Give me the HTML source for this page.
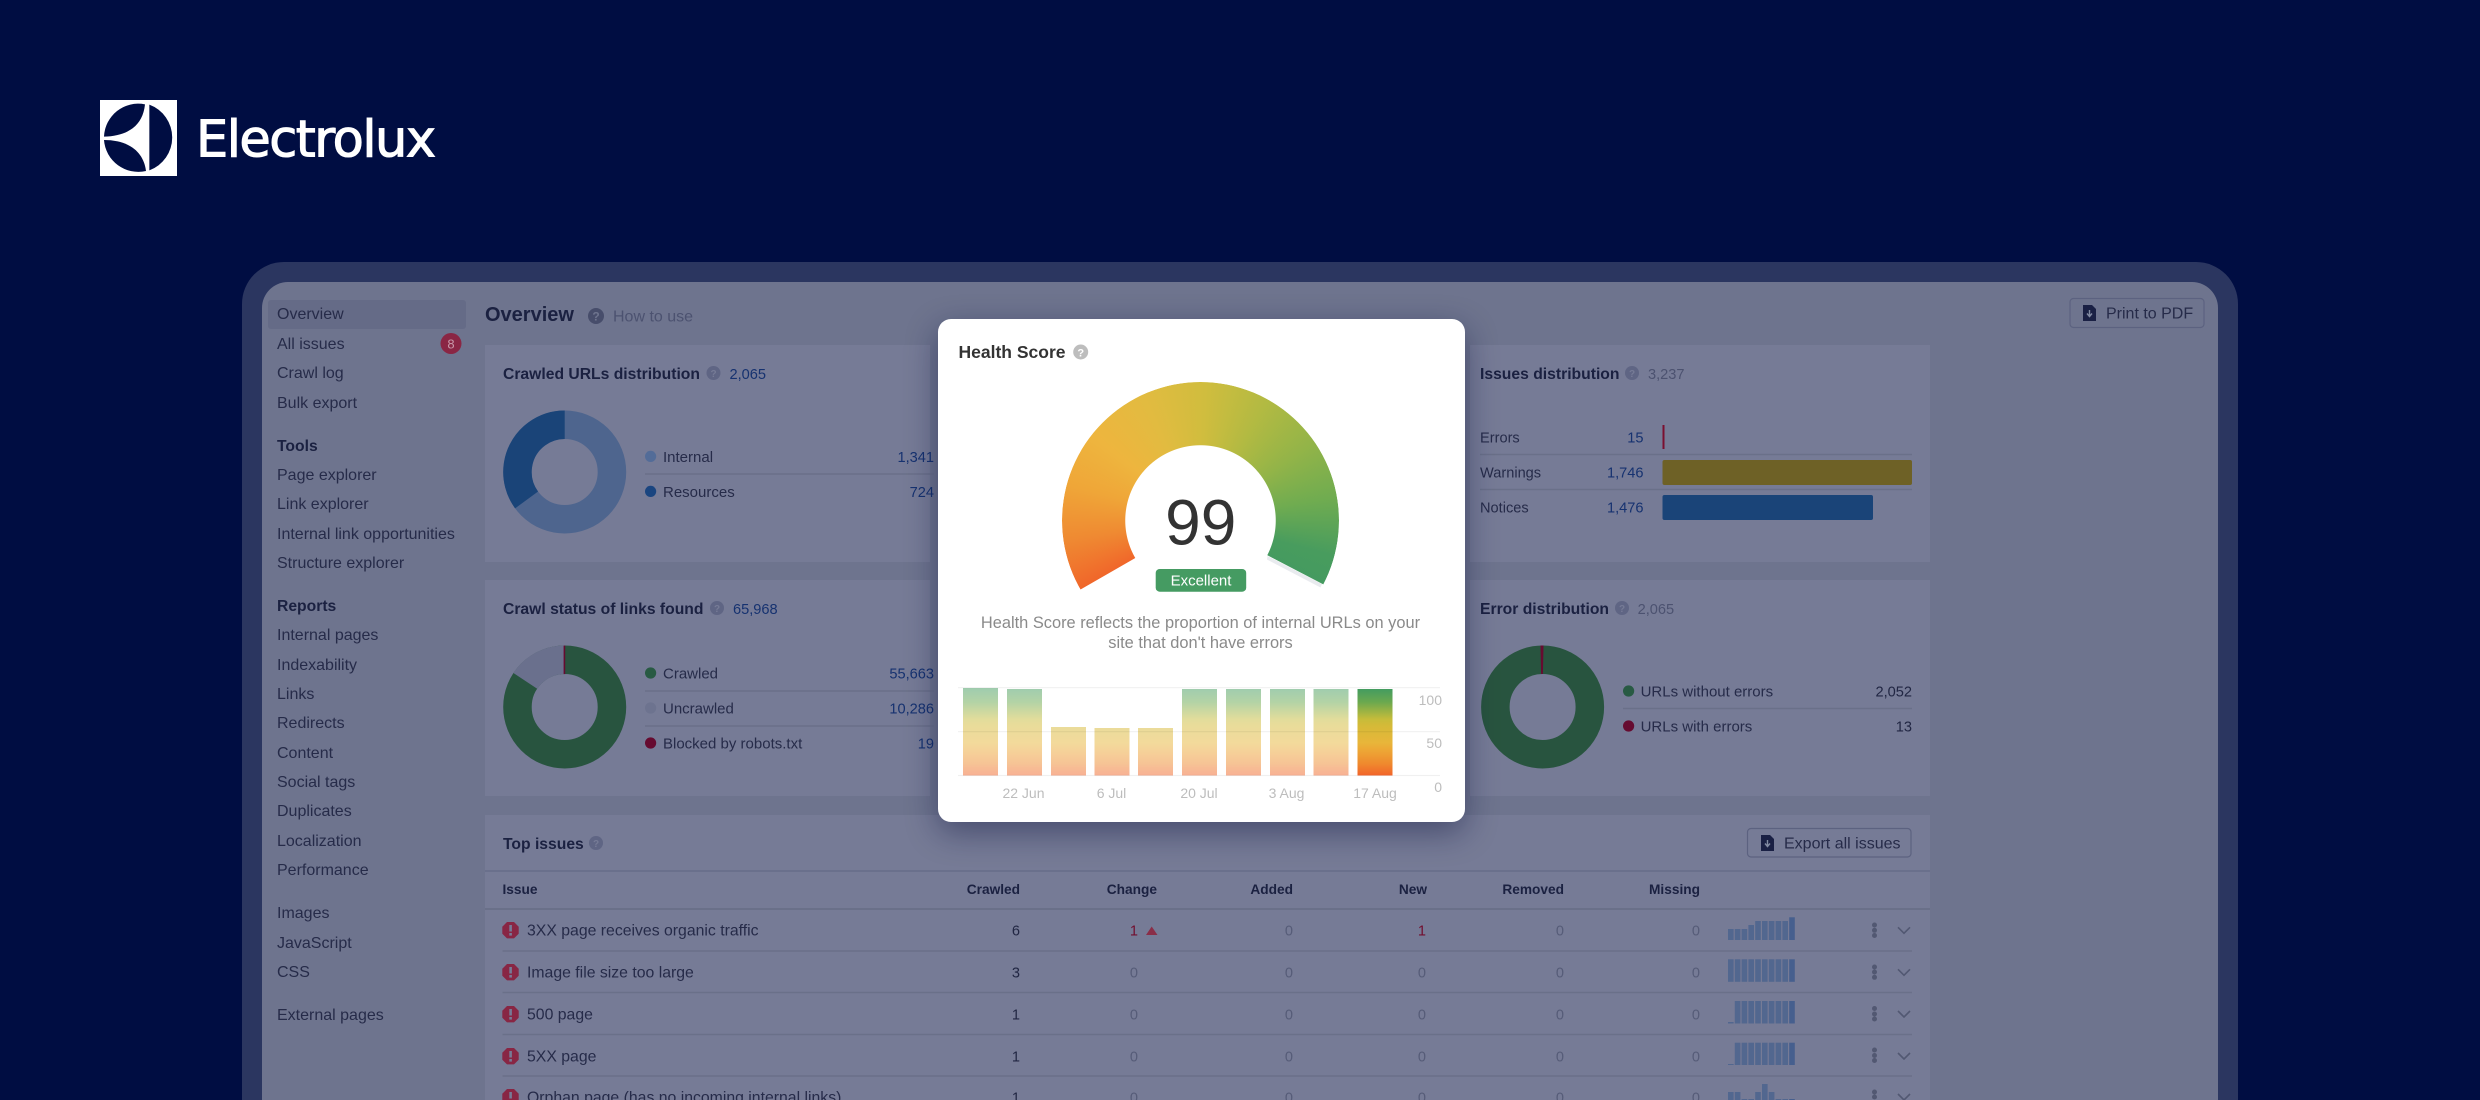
<!DOCTYPE html>
<html><head><meta charset="utf-8"><style>
html,body{margin:0;padding:0;width:2480px;height:1100px;overflow:hidden;background:#000d42}
svg{position:absolute;left:0;top:0}
text{font-family:"Liberation Sans",Arial,sans-serif;font-size:16px;fill:#262b49}
.b{font-weight:bold;fill:#1b2141;font-size:15.7px}
.s{fill:#262b49}
.m{fill:#262b49;font-size:15px}
.t{fill:#262b49;font-size:15.8px}
.r{text-anchor:end}
.bl{fill:#163270;font-size:14.6px}
.g{fill:#4c5270;font-size:14.6px}
.z{fill:#565c78;font-size:14.6px}
.d{fill:#212643;font-size:14.6px}
.h{font-size:13.7px;font-weight:bold;fill:#1b2141}
.l{stroke:#6a7089;stroke-width:1.5}
#card{position:absolute;left:938px;top:319px;width:527px;height:503px;background:#fff;border-radius:13px;box-shadow:0 10px 32px rgba(12,18,60,.45)}
#gauge{position:absolute;left:1062px;top:382px;width:277px;height:277px;border-radius:50%;
background:conic-gradient(from 240deg,#f0662a 0deg,#ef8a32 22deg,#efa638 45deg,#eeb53e 68deg,#e2bb40 95deg,#d0bd3e 122deg,#b3ba42 148deg,#93b448 175deg,#70ac50 200deg,#489c5e 225deg,#449a60 240deg,#449a60 300deg,#f0662a 300deg);
-webkit-mask:radial-gradient(circle at 50% 50%,transparent 75px,#000 75.5px);mask:radial-gradient(circle at 50% 50%,transparent 75px,#000 75.5px);
clip-path:polygon(50% 50%,-30% 96%,-30% -10%,130% -10%,130% 91.600%)}
</style></head><body>
<svg width="2480" height="1100" viewBox="0 0 2480 1100" style="filter:blur(.25px)">
<path d="M242 1100V304a42 42 0 0 1 42-42H2196a42 42 0 0 1 42 42V1100Z" fill="#2b3660"/>
<path d="M262 1100V308a26 26 0 0 1 26-26H2192a26 26 0 0 1 26 26V1100Z" fill="#6e748e"/>
<rect x="268" y="300" width="198" height="29" rx="3" fill="#656b87"/>
<text class="s" x="277" y="319">Overview</text>
<text class="s" x="277" y="349">All issues</text>
<circle cx="451" cy="343.500" r="10.500" fill="#8a2644"/><text x="451" y="348.500" text-anchor="middle" style="font-size:13px;fill:#c898a8">8</text>
<text class="s" x="277" y="378">Crawl log</text>
<text class="s" x="277" y="408">Bulk export</text>
<text class="b" x="277" y="451">Tools</text>
<text class="s" x="277" y="480">Page explorer</text>
<text class="s" x="277" y="509">Link explorer</text>
<text class="s" x="277" y="539">Internal link opportunities</text>
<text class="s" x="277" y="568">Structure explorer</text>
<text class="b" x="277" y="611">Reports</text>
<text class="s" x="277" y="640">Internal pages</text>
<text class="s" x="277" y="670">Indexability</text>
<text class="s" x="277" y="699">Links</text>
<text class="s" x="277" y="728">Redirects</text>
<text class="s" x="277" y="758">Content</text>
<text class="s" x="277" y="787">Social tags</text>
<text class="s" x="277" y="816">Duplicates</text>
<text class="s" x="277" y="846">Localization</text>
<text class="s" x="277" y="875">Performance</text>
<text class="s" x="277" y="918">Images</text>
<text class="s" x="277" y="948">JavaScript</text>
<text class="s" x="277" y="977">CSS</text>
<text class="s" x="277" y="1020">External pages</text>

<text class="b" x="485" y="321" style="font-size:20px">Overview</text>
<circle cx="596" cy="316" r="8" fill="#474d6b"/><text x="596" y="320.500" text-anchor="middle" style="font-size:12px;font-weight:bold;fill:#6e748e">?</text>
<text class="g" x="613" y="321.500" style="font-size:16px">How to use</text>
<rect x="2070" y="298.500" width="134" height="29" rx="3.500" fill="none" stroke="#5c6280" stroke-width="1.200"/>
<path d="M2083 305h9l4 4v12h-13z" fill="#1a2044"/><path d="M2089.500 310v6m-2.500-2.500l2.500 3 2.500-3" stroke="#828aa2" stroke-width="1.400" fill="none"/>
<text class="s" x="2106" y="318.500">Print to PDF</text>

<rect x="485" y="345" width="445" height="217" fill="#767b96"/>
<rect x="485" y="580" width="445" height="216" fill="#767b96"/>
<rect x="1470" y="345" width="460" height="217" fill="#767b96"/>
<rect x="1470" y="580" width="460" height="216" fill="#767b96"/>
<rect x="485" y="815" width="1445" height="285" fill="#767b96"/>

<text class="b" x="503" y="379">Crawled URLs distribution</text>
<circle cx="713.500" cy="373" r="7" fill="#5f6584"/><text x="713.500" y="377" text-anchor="middle" style="font-size:10px;font-weight:bold;fill:#767b96">?</text>
<text class="bl" x="729.500" y="379">2,065</text>
<circle cx="564.700" cy="472" r="47.250" fill="none" stroke="#4e658e" stroke-width="28.500"/>
<circle cx="564.700" cy="472" r="47.250" fill="none" stroke="#1a4478" stroke-width="28.500" pathLength="100" stroke-dasharray="35.060 100" transform="rotate(-216.200 564.700 472)"/>
<circle cx="650.600" cy="456.400" r="5.600" fill="#536c98"/><text class="m" x="663" y="462">Internal</text><text class="bl r" x="934" y="462">1,341</text>
<line class="l" x1="645" x2="934" y1="474" y2="474"/>
<circle cx="650.600" cy="491.400" r="5.600" fill="#1a4580"/><text class="m" x="663" y="497">Resources</text><text class="bl r" x="934" y="497">724</text>

<text class="b" x="503" y="614">Crawl status of links found</text>
<circle cx="717" cy="608" r="7" fill="#5f6584"/><text x="717" y="612" text-anchor="middle" style="font-size:10px;font-weight:bold;fill:#767b96">?</text>
<text class="bl" x="733" y="614">65,968</text>
<circle cx="564.700" cy="707" r="47.250" fill="none" stroke="#28543f" stroke-width="28.500"/>
<circle cx="564.700" cy="707" r="47.250" fill="none" stroke="#6a708d" stroke-width="28.500" pathLength="100" stroke-dasharray="15.600 100" transform="rotate(-146.500 564.700 707)"/>
<rect x="563.600" y="645.600" width="1.600" height="28.500" fill="#660b30"/>
<circle cx="650.600" cy="673" r="5.600" fill="#285a43"/><text class="m" x="663" y="678.500">Crawled</text><text class="bl r" x="934" y="678.500">55,663</text>
<line class="l" x1="645" x2="934" y1="691" y2="691"/>
<circle cx="650.600" cy="708" r="5.600" fill="#6d738f"/><text class="m" x="663" y="713.500">Uncrawled</text><text class="bl r" x="934" y="713.500">10,286</text>
<line class="l" x1="645" x2="934" y1="726" y2="726"/>
<circle cx="650.600" cy="743" r="5.600" fill="#660b30"/><text class="m" x="663" y="748.500">Blocked by robots.txt</text><text class="bl r" x="934" y="748.500">19</text>

<text class="b" x="1480" y="379">Issues distribution</text>
<circle cx="1632" cy="373" r="7" fill="#5f6584"/><text x="1632" y="377" text-anchor="middle" style="font-size:10px;font-weight:bold;fill:#767b96">?</text>
<text class="g" x="1648" y="379">3,237</text>
<text class="s" x="1480" y="442.500" style="font-size:14.600px">Errors</text><text class="bl r" x="1643.500" y="442.500">15</text>
<rect x="1662.500" y="425" width="2" height="24" fill="#7a0f30"/>
<line class="l" x1="1480" x2="1912" y1="454.500" y2="454.500"/>
<text class="s" x="1480" y="477.500" style="font-size:14.600px">Warnings</text><text class="bl r" x="1643.500" y="477.500">1,746</text>
<rect x="1662.500" y="460" width="249.500" height="25" rx="2" fill="#6e6126"/>
<line class="l" x1="1480" x2="1912" y1="489.500" y2="489.500"/>
<text class="s" x="1480" y="512.500" style="font-size:14.600px">Notices</text><text class="bl r" x="1643.500" y="512.500">1,476</text>
<rect x="1662.500" y="495" width="210.500" height="25" rx="2" fill="#1a4478"/>

<text class="b" x="1480" y="614">Error distribution</text>
<circle cx="1622" cy="608" r="7" fill="#5f6584"/><text x="1622" y="612" text-anchor="middle" style="font-size:10px;font-weight:bold;fill:#767b96">?</text>
<text class="g" x="1637.600" y="614">2,065</text>
<circle cx="1542.600" cy="707" r="47.250" fill="none" stroke="#28543f" stroke-width="28.500"/>
<path d="M1540.500 645.500h3l-.6 28.500h-1.800z" fill="#660b30"/>
<circle cx="1628.600" cy="691" r="5.600" fill="#285a43"/><text class="m" x="1640.600" y="696.500">URLs without errors</text><text class="d r" x="1912" y="696.500">2,052</text>
<line class="l" x1="1623" x2="1912" y1="708.500" y2="708.500"/>
<circle cx="1628.600" cy="726" r="5.600" fill="#660b30"/><text class="m" x="1640.600" y="731.500">URLs with errors</text><text class="d r" x="1912" y="731.500">13</text>

<text class="b" x="503" y="849">Top issues</text>
<circle cx="596" cy="843" r="7" fill="#5f6584"/><text x="596" y="847" text-anchor="middle" style="font-size:10px;font-weight:bold;fill:#767b96">?</text>
<rect x="1747.500" y="828.500" width="163.500" height="28.500" rx="3.500" fill="none" stroke="#5c6280" stroke-width="1.200"/>
<path d="M1761 835h9l4 4v12h-13z" fill="#1a2044"/><path d="M1767.500 840v6m-2.500-2.500l2.500 3 2.500-3" stroke="#828aa2" stroke-width="1.400" fill="none"/>
<text class="s" x="1784" y="848.500">Export all issues</text>
<line x1="485" x2="1930" y1="871" y2="871" stroke="#666c88" stroke-width="1.500"/>
<text class="h" x="502.500" y="894">Issue</text>
<text class="h r" x="1020" y="894">Crawled</text>
<text class="h r" x="1157" y="894">Change</text>
<text class="h r" x="1293" y="894">Added</text>
<text class="h r" x="1427" y="894">New</text>
<text class="h r" x="1564" y="894">Removed</text>
<text class="h r" x="1700" y="894">Missing</text>
<line x1="485" x2="1930" y1="909" y2="909" stroke="#6a7089" stroke-width="2"/>
<line class="l" x1="502.500" x2="1912" y1="951" y2="951"/>
<line class="l" x1="502.500" x2="1912" y1="992.500" y2="992.500"/>
<line class="l" x1="502.500" x2="1912" y1="1034.500" y2="1034.500"/>
<line class="l" x1="502.500" x2="1912" y1="1076" y2="1076"/>

<g fill="#882644">
<path d="M507 922h7l4.700 4.700v7l-4.700 4.700h-7l-4.700-4.700v-7z"/>
<path d="M507 964h7l4.700 4.700v7l-4.700 4.700h-7l-4.700-4.700v-7z"/>
<path d="M507 1006h7l4.700 4.700v7l-4.700 4.700h-7l-4.700-4.700v-7z"/>
<path d="M507 1048h7l4.700 4.700v7l-4.700 4.700h-7l-4.700-4.700v-7z"/>
<path d="M507 1089h7l4.700 4.700v6.300h-16.400v-6.300z"/>
</g>
<g fill="#767b96">
<rect x="509.300" y="925" width="2.600" height="6.500"/><rect x="509.300" y="933" width="2.600" height="2.600"/>
<rect x="509.300" y="967" width="2.600" height="6.500"/><rect x="509.300" y="975" width="2.600" height="2.600"/>
<rect x="509.300" y="1009" width="2.600" height="6.500"/><rect x="509.300" y="1017" width="2.600" height="2.600"/>
<rect x="509.300" y="1051" width="2.600" height="6.500"/><rect x="509.300" y="1059" width="2.600" height="2.600"/>
<rect x="509.300" y="1092" width="2.600" height="6.500"/>
</g>
<text class="t" x="527" y="935.500">3XX page receives organic traffic</text>
<text class="t" x="527" y="977.500">Image file size too large</text>
<text class="t" x="527" y="1019.500">500 page</text>
<text class="t" x="527" y="1061.500">5XX page</text>
<text class="t" x="527" y="1102.500">Orphan page (has no incoming internal links)</text>

<text class="d r" x="1020" y="935.500">6</text><text class="d r" x="1020" y="977.500">3</text><text class="d r" x="1020" y="1019.500">1</text><text class="d r" x="1020" y="1061.500">1</text><text class="d r" x="1020" y="1102.500">1</text>
<text class="r" x="1138" y="935.500" style="fill:#720e2e;font-size:14.600px">1</text><path d="M1146 935l5.700-8.500 5.800 8.500z" fill="#8a2e48"/>
<text class="z r" x="1138" y="977.500">0</text><text class="z r" x="1138" y="1019.500">0</text><text class="z r" x="1138" y="1061.500">0</text><text class="z r" x="1138" y="1102.500">0</text>
<text class="z r" x="1293" y="935.500">0</text><text class="z r" x="1293" y="977.500">0</text><text class="z r" x="1293" y="1019.500">0</text><text class="z r" x="1293" y="1061.500">0</text><text class="z r" x="1293" y="1102.500">0</text>
<text class="r" x="1426" y="935.500" style="fill:#720e2e;font-size:14.600px">1</text><text class="z r" x="1426" y="977.500">0</text><text class="z r" x="1426" y="1019.500">0</text><text class="z r" x="1426" y="1061.500">0</text><text class="z r" x="1426" y="1102.500">0</text>
<text class="z r" x="1564" y="935.500">0</text><text class="z r" x="1564" y="977.500">0</text><text class="z r" x="1564" y="1019.500">0</text><text class="z r" x="1564" y="1061.500">0</text><text class="z r" x="1564" y="1102.500">0</text>
<text class="z r" x="1700" y="935.500">0</text><text class="z r" x="1700" y="977.500">0</text><text class="z r" x="1700" y="1019.500">0</text><text class="z r" x="1700" y="1061.500">0</text><text class="z r" x="1700" y="1102.500">0</text>

<g fill="#52678f">
<rect x="1728" y="929" width="5.600" height="11"/><rect x="1734.800" y="929" width="5.600" height="11"/><rect x="1741.600" y="929" width="5.600" height="11"/><rect x="1748.400" y="925" width="5.600" height="15"/><rect x="1755.200" y="921" width="5.600" height="19"/><rect x="1762" y="921" width="5.600" height="19"/><rect x="1768.800" y="921" width="5.600" height="19"/><rect x="1775.600" y="921" width="5.600" height="19"/><rect x="1782.400" y="921" width="5.600" height="19"/>
<rect x="1728" y="959.300" width="5.600" height="22.500"/><rect x="1734.800" y="959.300" width="5.600" height="22.500"/><rect x="1741.600" y="959.300" width="5.600" height="22.500"/><rect x="1748.400" y="959.300" width="5.600" height="22.500"/><rect x="1755.200" y="959.300" width="5.600" height="22.500"/><rect x="1762" y="959.300" width="5.600" height="22.500"/><rect x="1768.800" y="959.300" width="5.600" height="22.500"/><rect x="1775.600" y="959.300" width="5.600" height="22.500"/><rect x="1782.400" y="959.300" width="5.600" height="22.500"/>
<rect x="1728" y="1022" width="5.600" height="1.500"/><rect x="1734.800" y="1001" width="5.600" height="22.500"/><rect x="1741.600" y="1001" width="5.600" height="22.500"/><rect x="1748.400" y="1001" width="5.600" height="22.500"/><rect x="1755.200" y="1001" width="5.600" height="22.500"/><rect x="1762" y="1001" width="5.600" height="22.500"/><rect x="1768.800" y="1001" width="5.600" height="22.500"/><rect x="1775.600" y="1001" width="5.600" height="22.500"/><rect x="1782.400" y="1001" width="5.600" height="22.500"/>
<rect x="1728" y="1064" width="5.600" height="1"/><rect x="1734.800" y="1042.700" width="5.600" height="22.300"/><rect x="1741.600" y="1042.700" width="5.600" height="22.300"/><rect x="1748.400" y="1042.700" width="5.600" height="22.300"/><rect x="1755.200" y="1042.700" width="5.600" height="22.300"/><rect x="1762" y="1042.700" width="5.600" height="22.300"/><rect x="1768.800" y="1042.700" width="5.600" height="22.300"/><rect x="1775.600" y="1042.700" width="5.600" height="22.300"/><rect x="1782.400" y="1042.700" width="5.600" height="22.300"/>
<rect x="1728" y="1092" width="5.600" height="8"/><rect x="1734.800" y="1092" width="5.600" height="8"/><rect x="1741.600" y="1099" width="5.600" height="1"/><rect x="1748.400" y="1099" width="5.600" height="1"/><rect x="1755.200" y="1092" width="5.600" height="8"/><rect x="1762" y="1084" width="5.600" height="16"/><rect x="1768.800" y="1092" width="5.600" height="8"/><rect x="1775.600" y="1099" width="5.600" height="1"/><rect x="1782.400" y="1099" width="5.600" height="1"/>
</g>
<g fill="#465f8e">
<rect x="1789.200" y="917.300" width="5.600" height="22.700"/><rect x="1789.200" y="959.300" width="5.600" height="22.500"/><rect x="1789.200" y="1001" width="5.600" height="22.500"/><rect x="1789.200" y="1042.700" width="5.600" height="22.300"/><rect x="1789.200" y="1099" width="5.600" height="1"/>
</g>
<g fill="#525872">
<circle cx="1874.500" cy="925" r="2.500"/><circle cx="1874.500" cy="930.300" r="2.500"/><circle cx="1874.500" cy="935.500" r="2.500"/>
<circle cx="1874.500" cy="967" r="2.500"/><circle cx="1874.500" cy="972" r="2.500"/><circle cx="1874.500" cy="977.300" r="2.500"/>
<circle cx="1874.500" cy="1008.500" r="2.500"/><circle cx="1874.500" cy="1014" r="2.500"/><circle cx="1874.500" cy="1019" r="2.500"/>
<circle cx="1874.500" cy="1050" r="2.500"/><circle cx="1874.500" cy="1055.500" r="2.500"/><circle cx="1874.500" cy="1060.500" r="2.500"/>
<circle cx="1874.500" cy="1092" r="2.500"/><circle cx="1874.500" cy="1097" r="2.500"/>
</g>
<g fill="none" stroke="#525872" stroke-width="1.600">
<path d="M1898 927.300l6 6 6-6"/><path d="M1898 969.300l6 6 6-6"/><path d="M1898 1011l6 6 6-6"/><path d="M1898 1053l6 6 6-6"/><path d="M1898 1094l6 6 6-6"/>
</g>
</svg>

<svg width="2480" height="1100" viewBox="0 0 2480 1100">
<rect x="100" y="100" width="77" height="76" fill="#fff"/>
<g transform="translate(90 90) scale(.33333)" fill="#000d42">
<path d="M165 43A103 103 0 0 0 42 140C110 138 158 110 165 43Z"/>
<path d="M42 150C110 150 160 180 168 243A103 103 0 0 1 42 150Z"/>
<path d="M178 44A105 105 0 0 1 178 241Z"/>
</g>
<text x="196" y="156.500" textLength="240" lengthAdjust="spacing" style="font-family:'DejaVu Sans',sans-serif;font-size:51px;fill:#fff;stroke:#fff;stroke-width:1.100">Electrolux</text>
</svg>

<div id="card"></div>
<div id="gauge"></div>
<svg width="2480" height="1100" viewBox="0 0 2480 1100">
<defs><linearGradient id="hg" gradientUnits="userSpaceOnUse" x1="0" x2="0" y1="689" y2="775.500">
<stop offset="0" stop-color="#449c60"/><stop offset=".15" stop-color="#6aa84f"/><stop offset=".35" stop-color="#c6bc3a"/><stop offset=".42" stop-color="#d4ba38"/><stop offset=".62" stop-color="#e8b63a"/><stop offset=".72" stop-color="#eda535"/><stop offset=".86" stop-color="#ef8a2e"/><stop offset="1" stop-color="#f2642a"/>
</linearGradient></defs>
<path d="M1267.500 556l54.500 28-1.500 3.500-53.500-28z" fill="#e9ebef"/>
<text x="958.500" y="358" style="font-size:17.500px;font-weight:bold;fill:#333">Health Score</text>
<circle cx="1080.700" cy="352" r="7.500" fill="#bdbdbd"/><text x="1080.700" y="356.500" text-anchor="middle" style="font-size:11px;font-weight:bold;fill:#fff">?</text>
<text x="1200.700" y="544.500" text-anchor="middle" style="font-size:64px;fill:#333">99</text>
<rect x="1155.700" y="569" width="90.500" height="22.700" rx="4" fill="#459b62"/>
<text x="1201" y="585.500" text-anchor="middle" style="font-size:15px;fill:#fff">Excellent</text>
<text x="1200.500" y="628" text-anchor="middle" style="font-size:16.400px;fill:#8a8a8a">Health Score reflects the proportion of internal URLs on your</text>
<text x="1200.500" y="648" text-anchor="middle" style="font-size:16.400px;fill:#8a8a8a">site that don't have errors</text>
<g fill="url(#hg)" opacity=".5">
<rect x="963" y="688" width="35" height="87.500"/><rect x="1007" y="689" width="35" height="86.500"/><rect x="1051" y="727" width="35" height="48.500"/><rect x="1094.500" y="728" width="35" height="47.500"/><rect x="1138" y="728" width="35" height="47.500"/><rect x="1182" y="689" width="35" height="86.500"/><rect x="1226" y="689" width="35" height="86.500"/><rect x="1270" y="689" width="35" height="86.500"/><rect x="1313.500" y="689" width="35" height="86.500"/>
</g>
<rect x="1357.500" y="689" width="35" height="86.500" fill="url(#hg)"/>
<g stroke="#000" stroke-opacity=".06" stroke-width="1.200"><line x1="958" x2="1440" y1="687.700" y2="687.700"/><line x1="958" x2="1440" y1="731.700" y2="731.700"/><line x1="958" x2="1440" y1="775.500" y2="775.500"/></g>
<text x="1442" y="705" text-anchor="end" style="font-size:14px;fill:#bdbdbd">100</text>
<text x="1442" y="748" text-anchor="end" style="font-size:14px;fill:#bdbdbd">50</text>
<text x="1442" y="792" text-anchor="end" style="font-size:14px;fill:#bdbdbd">0</text>
<text x="1023.500" y="798" text-anchor="middle" style="font-size:14px;fill:#bdbdbd">22 Jun</text>
<text x="1111.500" y="798" text-anchor="middle" style="font-size:14px;fill:#bdbdbd">6 Jul</text>
<text x="1199" y="798" text-anchor="middle" style="font-size:14px;fill:#bdbdbd">20 Jul</text>
<text x="1286.500" y="798" text-anchor="middle" style="font-size:14px;fill:#bdbdbd">3 Aug</text>
<text x="1375" y="798" text-anchor="middle" style="font-size:14px;fill:#bdbdbd">17 Aug</text>
</svg>
</body></html>
